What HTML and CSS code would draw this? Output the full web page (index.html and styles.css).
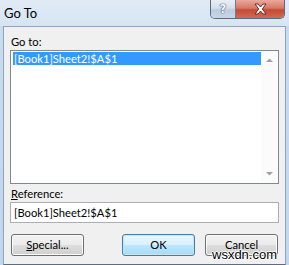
FILE: index.html
```html
<!DOCTYPE html>
<html>
<head>
<meta charset="utf-8">
<link rel="stylesheet" href="styles.css">
</head>
<body>
<div class="window">
  <div class="titlebar">
    <div class="title">Go To</div>
    <div class="caption-buttons">
      <div class="cap-btn help"><span>?</span></div>
      <div class="cap-btn close">
        <svg width="15" height="12" viewBox="0 0 15 12">
          <path d="M2 1 L5 1 L7.5 4 L10 1 L13 1 L9.3 6 L13 11 L10 11 L7.5 8 L5 11 L2 11 L5.7 6 Z" fill="#fff" stroke="#6b2a22" stroke-width="1" stroke-linejoin="round"/>
        </svg>
      </div>
    </div>
  </div>
  <div class="client">
    <div class="label">Go to:</div>
    <div class="listbox">
      <div class="items">
        <div class="item selected">[Book1]Sheet2!$A$1</div>
      </div>
      <div class="scrollbar">
        <svg class="arrow" width="9" height="6" viewBox="0 0 9 6"><path d="M1 5 L4.5 1.5 L8 5 Z" fill="#a0a0a0"/></svg>
        <svg class="arrow" width="9" height="6" viewBox="0 0 9 6"><path d="M1 1 L4.5 4.5 L8 1 Z" fill="#a0a0a0"/></svg>
      </div>
    </div>
    <div class="label ref-label"><u>R</u>eference:</div>
    <div class="input">[Book1]Sheet2!$A$1</div>
    <div class="buttons">
      <div class="btn"><u>S</u>pecial...</div>
      <div class="btn-group">
        <div class="btn default">OK</div>
        <div class="btn">Cancel</div>
      </div>
    </div>
  </div>
  <div class="watermark">wsxdn.com</div>
</div>
</body>
</html>
```
FILE: styles.css
```css
html, body {
  margin: 0;
  padding: 0;
}
body {
  width: 289px;
  height: 265px;
  overflow: hidden;
  font-family: "Segoe UI", Lato, "Noto Sans", sans-serif;
  font-size: 11.2px;
  color: #000;
}
.window {
  position: relative;
  width: 289px;
  height: 265px;
  background: linear-gradient(180deg, #d3e2f3 0px, #c9dbef 26px, #c3d6ec 100%);
  display: flex;
  flex-direction: column;
}
.titlebar {
  height: 26px;
  display: flex;
  justify-content: space-between;
  align-items: flex-start;
  background: linear-gradient(180deg, #e1ebf6 0%, #d6e4f3 100%);
}
.title {
  padding: 5px 0 0 4px;
  font-size: 13px;
  line-height: 16px;
  color: #000;
}
.caption-buttons {
  display: flex;
  margin-right: 4px;
  height: 18px;
  border: 1px solid #5a6a80;
  border-top: none;
  border-radius: 0 0 5px 5px;
  overflow: hidden;
}
.cap-btn {
  height: 18px;
  display: flex;
  align-items: center;
  justify-content: center;
}
.help {
  width: 24px;
  background: linear-gradient(180deg, #e8eef6 0%, #d5dfeb 45%, #bccbdd 55%, #c9d6e6 100%);
  border-right: 1px solid #6d7c90;
}
.help span {
  font-family: "DejaVu Sans", sans-serif;
  font-weight: bold;
  font-size: 12px;
  color: #f4f7fb;
  text-shadow: 0 0 1px #4e5d72, 0 0 1px #4e5d72, 0 0 1px #4e5d72;
  line-height: 12px;
}
.close {
  width: 48px;
  background: linear-gradient(180deg, #e9aa9d 0%, #d77865 45%, #c24b36 55%, #d36a52 100%);
}
.client {
  margin: 0 3px;
  height: 235px;
  background: #f0f0f0;
  border: 1px solid #8ea3bd;
  border-bottom-color: #5d6d80;
  padding: 7px 6px 0 6px;
  display: flex;
  flex-direction: column;
}
.label {
  line-height: 15px;
  height: 15px;
  margin-left: 1px;
}
.listbox {
  margin-top: 1px;
  height: 132px;
  border: 1px solid #828790;
  background: #fff;
  display: flex;
}
.items {
  flex: 1;
  padding: 1px 0 0 2px;
}
.item {
  height: 13px;
  line-height: 13px;
  padding-left: 1px;
}
.selected {
  background: #3399ff;
  color: #fff;
}
.scrollbar {
  width: 17px;
  background: #fbfbfb;
  display: flex;
  flex-direction: column;
  justify-content: space-between;
  align-items: center;
  padding: 6px 0 6px 0;
}
.ref-label {
  margin-top: 2px;
}
.input {
  margin-top: 1px;
  height: 19px;
  line-height: 19px;
  border: 1px solid #abadb3;
  background: #fff;
  padding-left: 3px;
}
.buttons {
  margin-top: 11px;
  display: flex;
  justify-content: space-between;
  padding-left: 1px;
  padding-right: 1px;
}
.btn-group {
  display: flex;
  gap: 10px;
}
.btn {
  width: 71px;
  height: 20px;
  line-height: 20px;
  text-align: center;
  border: 1px solid #707070;
  border-radius: 3px;
  background: linear-gradient(180deg, #f2f2f2 0%, #ebebeb 48%, #dddddd 52%, #cfcfcf 100%);
  box-shadow: inset 0 0 0 1px #fbfbfb;
}
.btn.default {
  border-color: #3c7fb1;
  background: linear-gradient(180deg, #eaf6fd 0%, #d9f0fc 48%, #bee6fd 52%, #a7d9f5 100%);
  box-shadow: inset 0 0 0 1px #c8e5f5;
}
.watermark {
  position: absolute;
  left: 212px;
  top: 247px;
  font-family: "Liberation Sans", Arial, sans-serif;
  font-size: 13px;
  line-height: 15px;
  color: #000;
  text-shadow: 1px 0 0 #fff, -1px 0 0 #fff, 0 1px 0 #fff, 0 -1px 0 #fff;
}
```
